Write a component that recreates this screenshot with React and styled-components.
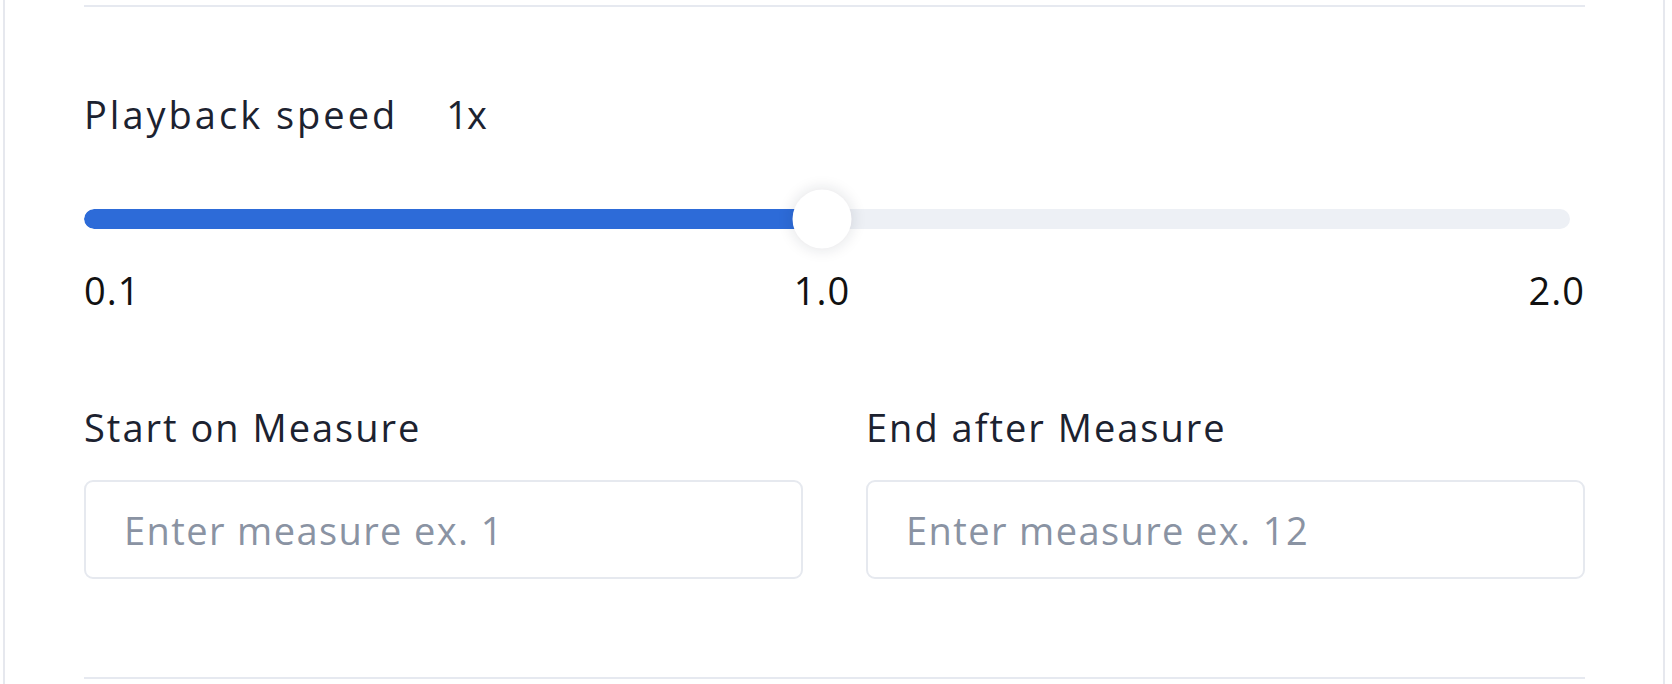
import React, { useState } from 'react';
import styled, { createGlobalStyle } from 'styled-components';

const GlobalStyle = createGlobalStyle`
  html, body {
    margin: 0;
    padding: 0;
    background: #fff;
  }

  body {
    font-family: 'Open Sans', 'Liberation Sans', sans-serif;
    -webkit-font-smoothing: antialiased;
  }
`;

const Panel = styled.div`
  box-sizing: border-box;
  width: 1662px;
  min-height: 684px;
  margin-left: 3px;
  padding: 5px 78px 0 79px;
  border-left: 2px solid #e6e8ee;
  border-right: 2px solid #e6e8ee;
  background: #fff;
`;

const Divider = styled.div`
  height: 2px;
  background: #e6e9f0;
  margin-top: ${(p) => p.$top || 0}px;
`;

const Heading = styled.div`
  display: flex;
  align-items: baseline;
  gap: 48px;
  margin-top: 83px;
  font-size: 38px;
  line-height: 48px;
  letter-spacing: 3px;
  color: #1c2230;
`;

const SpeedValue = styled.span`
  letter-spacing: -1px;
`;

const SliderWrap = styled.div`
  position: relative;
  margin-top: 71px;
  margin-right: 15px;
  height: 20px;
`;

const Track = styled.div`
  height: 20px;
  border-radius: 10px;
  background: #edf0f5;
  overflow: hidden;
`;

const Fill = styled.div`
  height: 100%;
  border-radius: 10px;
  background: #2d6bd8;
`;

const Thumb = styled.div`
  position: absolute;
  top: 50%;
  width: 59px;
  height: 59px;
  border-radius: 50%;
  background: #fff;
  box-shadow: 0 0 16px rgba(20, 30, 50, 0.14);
  transform: translate(-50%, -50%);
`;

const Ticks = styled.div`
  position: relative;
  display: flex;
  justify-content: space-between;
  margin-top: 37px;
  font-size: 38px;
  line-height: 48px;
  letter-spacing: 1px;
  color: #111;
`;

const MidTick = styled.span`
  position: absolute;
  top: 0;
  transform: translateX(-50%);
`;

const Fields = styled.div`
  display: grid;
  grid-template-columns: 1fr 1fr;
  column-gap: 63px;
  margin-top: 89px;
`;

const Field = styled.label`
  display: flex;
  flex-direction: column;
  gap: 29px;
`;

const FieldLabel = styled.span`
  font-size: 38px;
  line-height: 48px;
  letter-spacing: 2px;
  color: #1c2230;
`;

const Input = styled.input`
  box-sizing: border-box;
  width: 100%;
  height: 99px;
  padding: 0 38px;
  border: 2px solid #e6e9ef;
  border-radius: 9px;
  outline: none;
  background: #fff;
  font-family: inherit;
  font-size: 38px;
  letter-spacing: 1.4px;
  color: #1c2230;

  &::placeholder {
    color: #8a93a3;
  }
`;

export default function App() {
  const [speed] = useState(1.0);
  // thumb sits just left of the track's middle at 1x
  const percent = 49.66;

  return (
    <>
      <GlobalStyle />
      <Panel>
        <Divider />

        <Heading>
          <span>Playback speed</span>
          <SpeedValue>{speed}x</SpeedValue>
        </Heading>

        <SliderWrap>
          <Track>
            <Fill style={{ width: `${percent}%` }} />
          </Track>
          <Thumb style={{ left: `${percent}%` }} />
        </SliderWrap>

        <Ticks>
          <span>0.1</span>
          <MidTick style={{ left: `calc(${percent}% * 1486 / 1501)` }}>1.0</MidTick>
          <span>2.0</span>
        </Ticks>

        <Fields>
          <Field>
            <FieldLabel>Start on Measure</FieldLabel>
            <Input placeholder="Enter measure ex. 1" />
          </Field>
          <Field>
            <FieldLabel>End after Measure</FieldLabel>
            <Input placeholder="Enter measure ex. 12" />
          </Field>
        </Fields>

        <Divider $top={98} />
      </Panel>
    </>
  );
}
